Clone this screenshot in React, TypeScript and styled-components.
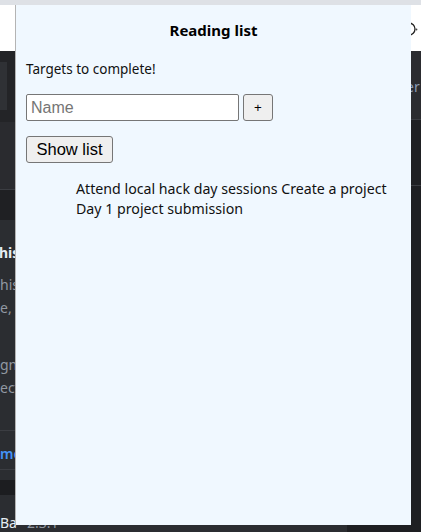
import React from "react";
import styled, { createGlobalStyle } from "styled-components";

const GlobalStyle = createGlobalStyle`
  html, body {
    margin: 0;
    padding: 0;
    width: 421px;
    height: 532px;
    overflow: hidden;
    background: #1e1f22;
  }
  #root {
    width: 421px;
    height: 532px;
  }
  * { box-sizing: border-box; }
`;

const Screen = styled.div`
  position: relative;
  width: 421px;
  height: 532px;
  overflow: hidden;
  display: flex;
  flex-direction: column;
  font-family: "Noto Sans", "Liberation Sans", sans-serif;
`;

const TabStrip = styled.div`
  flex: none;
  height: 5px;
  background: #dee1e6;
`;

const Toolbar = styled.div`
  flex: none;
  height: 46px;
  background: #ffffff;
  display: flex;
  justify-content: flex-end;
  align-items: center;
  padding-top: 1px;
`;

const DarkArea = styled.div`
  flex: 1;
  display: grid;
  grid-template-columns: 347px 1fr;
  min-height: 0;
`;

const LeftPane = styled.div`
  display: flex;
  flex-direction: column;
  background: #2b2d31;
  overflow: hidden;
`;

const RightPane = styled.div`
  display: flex;
  flex-direction: column;
  background: #1e1f22;
  overflow: hidden;
`;

const Band = styled.div<{ $h: number; $bg: string; $line?: boolean }>`
  flex: none;
  height: ${(p) => p.$h}px;
  background: ${(p) => p.$bg};
  border-bottom: ${(p) => (p.$line ? "1px solid #3b3d42" : "none")};
`;

const CardBand = styled(Band)`
  display: flex;
  align-items: flex-start;
`;

const CardEdge = styled.div`
  width: 7px;
  height: 48px;
  background: #2f3135;
`;

const TextSection = styled.div`
  flex: none;
  height: 211px;
  padding-top: 23px;
  border-bottom: 1px solid #3b3d42;
  font-size: 14px;
  line-height: 20px;
  white-space: nowrap;
`;

const Heading = styled.div`
  font-weight: 700;
  color: #e6edf3;
  margin-left: -1px;
`;

const Muted = styled.div<{ $mt?: number }>`
  color: #9198a1;
  margin-top: ${(p) => p.$mt ?? 0}px;
  line-height: 23px;
`;

const LinkRow = styled.div`
  flex: none;
  height: 39px;
  padding-top: 13px;
  border-bottom: 1px solid #3b3d42;
  font-size: 14px;
  line-height: 20px;
  font-weight: 600;
  color: #4493f8;
  white-space: nowrap;
`;

const FooterRow = styled.div`
  flex: 1;
  padding-top: 18px;
  font-size: 14px;
  line-height: 20px;
  color: #e6edf3;
  white-space: nowrap;
`;

const Version = styled.span`
  color: #9198a1;
  margin-left: 10px;
`;

const SideLabel = styled(Band)`
  font-size: 14px;
  line-height: 20px;
  color: #8b9bb4;
  padding: 26px 0 0 54px;
  white-space: nowrap;
`;

const Popup = styled.div`
  position: absolute;
  left: 15px;
  top: 5px;
  width: 396px;
  height: 520px;
  background: #f0f8ff;
  border-left: 1px solid #b4b4b4;
  padding: 15px 10px 0 10px;
  font-family: "Noto Sans", "Liberation Sans", sans-serif;
  color: #000000;
`;

const Title = styled.h1`
  margin: 0;
  font-size: 15px;
  line-height: 20px;
  font-weight: 700;
  text-align: center;
`;

const Lead = styled.p`
  margin: 19px 0 0 0;
  font-size: 13.5px;
  line-height: 20px;
  color: #111111;
`;

const AddRow = styled.div`
  display: flex;
  gap: 4px;
  margin-top: 15px;
`;

const NameInput = styled.input`
  width: 213px;
  height: 27px;
  border: 1px solid #767676;
  border-radius: 2px;
  background: #ffffff;
  padding: 0 4px;
  font-family: "Liberation Sans", Arial, sans-serif;
  font-size: 16px;
  color: #000;
  &::placeholder {
    color: #757575;
  }
`;

const NativeButton = styled.button<{ $w: number; $fs: number }>`
  width: ${(p) => p.$w}px;
  height: 27px;
  padding: 0;
  border: 1px solid #767676;
  border-radius: 3px;
  background: #efefef;
  color: #000;
  font-family: "Liberation Sans", Arial, sans-serif;
  font-size: ${(p) => p.$fs}px;
  line-height: 1;
`;

const ShowRow = styled.div`
  margin-top: 15px;
  display: flex;
`;

const TargetList = styled.ul`
  margin: 16px 0 0 50px;
  padding: 0;
  list-style: none;
  font-size: 14.2px;
  line-height: 19.5px;
  color: #111111;
`;

const Target = styled.li`
  display: inline;
`;

const targets = [
  "Attend local hack day sessions",
  "Create a project",
  "Day 1 project submission",
];

function ProfileGlyph() {
  return (
    <svg width="23" height="20" viewBox="0 0 23 20" aria-hidden="true">
      <circle cx="11" cy="10" r="6" fill="none" stroke="#222" strokeWidth="1.3" />
      <circle cx="18.5" cy="10.5" r="0.9" fill="#444" />
    </svg>
  );
}

export default function App() {
  return (
    <>
      <GlobalStyle />
      <Screen>
        <TabStrip />
        <Toolbar>
          <ProfileGlyph />
        </Toolbar>
        <DarkArea>
          <LeftPane>
            <Band $h={11} $bg="#232427" />
            <CardBand $h={60} $bg="#232427">
              <CardEdge />
            </CardBand>
            <Band $h={68} $bg="#2a2b2f" $line />
            <Band $h={30} $bg="#1f2023" />
            <TextSection>
              <Heading>his</Heading>
              <Muted $mt={10}>his</Muted>
              <Muted>e, c</Muted>
              <Muted $mt={34}>gn</Muted>
              <Muted>ect</Muted>
            </TextSection>
            <LinkRow>me</LinkRow>
            <Band $h={10} $bg="#2b2d31" />
            <Band $h={15} $bg="#1c1d20" />
            <FooterRow>
              Ba<Version>2.3.1</Version>
            </FooterRow>
          </LeftPane>
          <RightPane>
            <SideLabel $h={69} $bg="#2b2c30" $line>
              ter
            </SideLabel>
            <Band $h={66} $bg="#1f2023" $line />
          </RightPane>
        </DarkArea>

        <Popup>
          <Title>Reading list</Title>
          <Lead>Targets to complete!</Lead>
          <AddRow>
            <NameInput type="text" placeholder="Name" />
            <NativeButton $w={30} $fs={13.3}>+</NativeButton>
          </AddRow>
          <ShowRow>
            <NativeButton $w={87} $fs={16.5}>Show list</NativeButton>
          </ShowRow>
          <TargetList>
            {targets.map((t, i) => (
              <Target key={t}>
                {t}
                {i < targets.length - 1 ? " " : ""}
              </Target>
            ))}
          </TargetList>
        </Popup>
      </Screen>
    </>
  );
}
